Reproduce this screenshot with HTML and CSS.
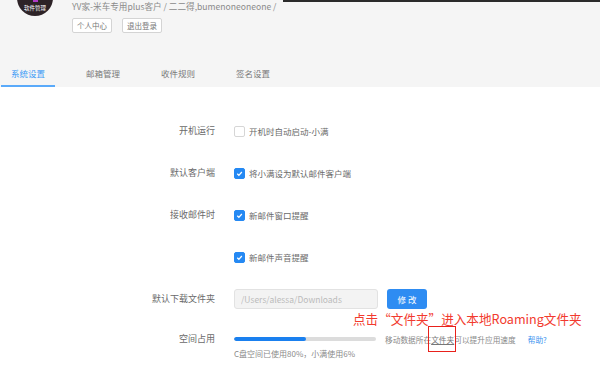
FILE: index.html
```html
<!DOCTYPE html>
<html lang="zh-CN">
<head>
    <meta charset="UTF-8">
    <meta name="viewport" content="width=device-width, initial-scale=1.0">
    <title>系统设置</title>
    <link rel="stylesheet" href="styles.css">
</head>
<body>
    <div class="page">
        <header class="top">
            <div class="profile">
                <div class="avatar">
                    <span class="avatar-mark"></span>
                    <span class="avatar-text">软件管理</span>
                </div>
                <div class="info">
                    <div class="account">YV家-米车专用plus客户 / 二二得,bumenoneoneone /</div>
                    <div class="actions">
                        <button class="small-btn">个人中心</button>
                        <button class="small-btn">退出登录</button>
                    </div>
                </div>
            </div>
            <nav class="tabs">
                <a class="tab active">系统设置</a>
                <a class="tab">邮箱管理</a>
                <a class="tab">收件规则</a>
                <a class="tab">签名设置</a>
            </nav>
        </header>

        <main class="settings">
            <div class="row">
                <div class="label">开机运行</div>
                <label class="check"><span class="box"></span>开机时自动启动-小满</label>
            </div>
            <div class="row">
                <div class="label">默认客户端</div>
                <label class="check"><span class="box on"><svg viewBox="0 0 10 10"><polyline points="2.5,5.2 4.3,7 7.6,3.3"/></svg></span>将小满设为默认邮件客户端</label>
            </div>
            <div class="row">
                <div class="label">接收邮件时</div>
                <label class="check"><span class="box on"><svg viewBox="0 0 10 10"><polyline points="2.5,5.2 4.3,7 7.6,3.3"/></svg></span>新邮件窗口提醒</label>
            </div>
            <div class="row">
                <div class="label"></div>
                <label class="check"><span class="box on"><svg viewBox="0 0 10 10"><polyline points="2.5,5.2 4.3,7 7.6,3.3"/></svg></span>新邮件声音提醒</label>
            </div>
            <div class="row">
                <div class="label">默认下载文件夹</div>
                <div class="folder">
                    <input type="text" class="path" placeholder="/Users/alessa/Downloads">
                    <button class="primary">修 改</button>
                </div>
                <div class="note">点击“文件夹”进入本地Roaming文件夹</div>
            </div>
            <div class="row storage">
                <div class="label">空间占用</div>
                <div class="usage">
                    <div class="usage-line">
                        <div class="bar"><div class="fill" style="width: 51%;"></div></div>
                        <span class="hint">移动数据所在<a class="link-folder">文件夹</a>可以提升应用速度</span>
                        <a class="help">帮助?</a>
                    </div>
                    <div class="usage-text">C盘空间已使用80%，小满使用6%</div>
                </div>
            </div>
        </main>

        <footer class="bottom"></footer>
    </div>
</body>
</html>
```

FILE: styles.css
```css
body {
    margin: 0;
    font-family: "Noto Sans CJK SC", "Noto Sans", sans-serif;
    color: #666;
    background-color: #fff;
}
.page {
    height: 370px;
    display: flex;
    flex-direction: column;
    overflow: hidden;
}
.top {
    position: relative;
    background-color: #f5f5f5;
}
.top::before {
    content: "";
    position: absolute;
    top: 0;
    left: 283px;
    right: 0;
    height: 1.5px;
    background-color: #2b2b2b;
}
.profile {
    display: flex;
    align-items: flex-start;
}
.avatar {
    position: relative;
    width: 36px;
    height: 36px;
    margin: -20px 19px 0 17px;
    border-radius: 50%;
    background-color: #2d2327;
    flex-shrink: 0;
}
.avatar-mark {
    position: absolute;
    top: 20px;
    left: 16px;
    width: 5px;
    height: 1.5px;
    background-color: #b03cc8;
}
.avatar-text {
    position: absolute;
    left: 0;
    right: 0;
    bottom: 4px;
    text-align: center;
    color: #fff;
    font-size: 5.5px;
    line-height: 7px;
}
.account {
    font-size: 8.6px;
    line-height: 12px;
    color: #8a8a8a;
}
.actions {
    display: flex;
    gap: 10px;
    margin-top: 6px;
}
.small-btn {
    font-family: inherit;
    font-size: 7.5px;
    line-height: 13px;
    padding: 0 4px;
    border: 1px solid #d4d4d4;
    border-radius: 2px;
    background-color: #fff;
    color: #777;
}
.tabs {
    display: flex;
    margin-top: 34px;
    padding-left: 1px;
}
.tab {
    font-size: 8.5px;
    line-height: 12px;
    padding: 0 10px 6px;
    margin-right: 21px;
    border-bottom: 2px solid transparent;
    color: #7a7a7a;
}
.tab.active {
    color: #3a9af6;
    border-bottom-color: #5aaafa;
}
.settings {
    flex: 1;
    padding-top: 23px;
}
.row {
    position: relative;
    display: grid;
    grid-template-columns: 215px 1fr;
    column-gap: 19px;
    align-items: center;
    height: 42px;
}
.label {
    text-align: right;
    font-size: 9px;
    line-height: 12px;
    color: #6a6a6a;
}
.check {
    display: flex;
    align-items: center;
    gap: 4px;
    font-size: 8.5px;
    line-height: 12px;
    color: #6a6a6a;
}
.box {
    width: 9px;
    height: 9px;
    border: 1px solid #d6d6d6;
    border-radius: 2px;
    background-color: #fff;
    display: flex;
}
.box.on {
    background-color: #2589f3;
    border-color: #2589f3;
}
.box svg {
    width: 9px;
    height: 9px;
    fill: none;
    stroke: #fff;
    stroke-width: 1.4;
}
.folder {
    display: flex;
    gap: 9px;
}
.path {
    width: 144px;
    height: 20px;
    box-sizing: border-box;
    padding: 0 6px;
    border: 1px solid #e2e2e2;
    border-radius: 3px;
    background-color: #f3f3f3;
    font-family: inherit;
    font-size: 8.5px;
}
.path::placeholder {
    color: #bbb;
}
.primary {
    width: 40px;
    height: 20px;
    border: none;
    border-radius: 3px;
    background-color: #2e8cf2;
    color: #fff;
    font-family: inherit;
    font-size: 8.5px;
}
.note {
    position: absolute;
    left: 353px;
    top: 33px;
    font-size: 12.6px;
    line-height: 16px;
    color: #f23a2e;
    white-space: nowrap;
}
.storage {
    align-items: start;
    padding-top: 13px;
}
.usage-line {
    display: flex;
    align-items: center;
    height: 12px;
}
.bar {
    width: 142px;
    height: 4px;
    border-radius: 2px;
    background-color: #dcdcdc;
    overflow: hidden;
}
.fill {
    height: 100%;
    border-radius: 2px;
    background-color: #1a80ef;
}
.hint {
    margin-left: 9px;
    font-size: 7.7px;
    color: #8a8a8a;
    white-space: nowrap;
}
.link-folder {
    position: relative;
    color: #777;
    text-decoration: underline;
}
.link-folder::after {
    content: "";
    position: absolute;
    left: -3px;
    right: -2px;
    top: -8px;
    bottom: -7px;
    border: 1.5px solid #e8211b;
}
.help {
    margin-left: 12px;
    font-size: 7.7px;
    color: #3d95f0;
}
.usage-text {
    margin-top: 3px;
    font-size: 8px;
    line-height: 12px;
    color: #8a8a8a;
}
.bottom {
    height: 3px;
    background-color: #2a2a2a;
}
```
